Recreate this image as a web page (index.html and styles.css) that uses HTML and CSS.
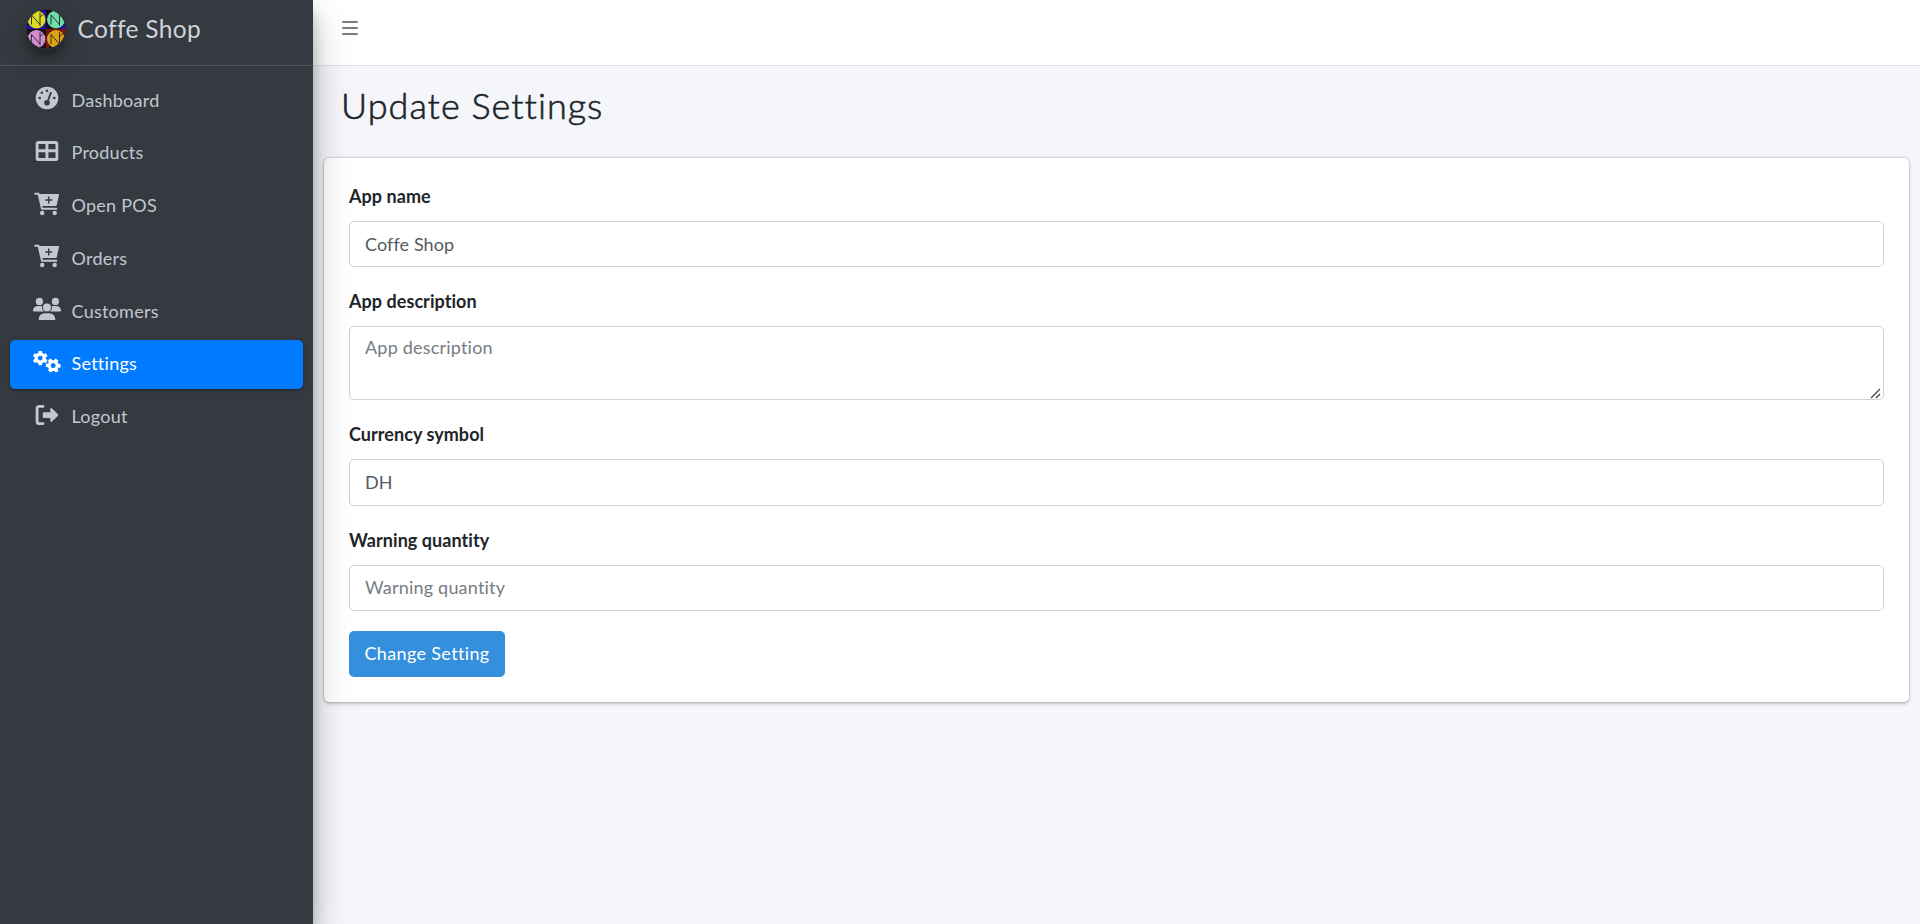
FILE: index.html
```html
<!DOCTYPE html>
<html lang="en">
<head>
<meta charset="utf-8">
<title>Update Settings</title>
<link rel="stylesheet" href="styles.css">
</head>
<body>
<svg width="0" height="0" class="defs" aria-hidden="true">
  <symbol id="cart" viewBox="0 0 26 24">
    <path fill="none" stroke="currentColor" stroke-width="2" stroke-linecap="round" stroke-linejoin="round" d="M1.200 1.800H4.500L8 16.700H22.300"/>
    <path fill="currentColor" fill-rule="evenodd" d="M5 2H24.500Q25.300 2 25 3L22.800 13Q22.500 14 21.500 14H7.800ZM14 4.500V7.300H11.200V8.700H14V11.500H15.400V8.700H18.200V7.300H15.400V4.500Z"/>
    <circle cx="8.200" cy="21" r="2.200" fill="currentColor"/><circle cx="20.700" cy="21" r="2.200" fill="currentColor"/>
  </symbol>
  <symbol id="gear" viewBox="-8 -8 16 16">
    <path fill="currentColor" fill-rule="evenodd" d="M-1.700-7.400H1.700L2.200-5.100Q3-4.800 3.700-4.200L5.900-5L7.500-2.100L5.700-.6V.8L7.500 2.300L5.900 5L3.700 4.300Q3 4.900 2.200 5.200L1.700 7.400H-1.700L-2.200 5.200Q-3 4.900-3.700 4.300L-5.900 5L-7.500 2.300L-5.700.8V-.6L-7.500-2.100L-5.900-5L-3.700-4.200Q-3-4.800-2.200-5.100ZM0-2.500A2.500 2.500 0 1 0 0 2.500A2.500 2.500 0 1 0 0-2.500Z"/>
  </symbol>
</svg>
<div class="app">
  <aside class="sidebar">
    <a class="brand">
      <svg class="brand-logo" viewBox="0 0 40 40">
        <defs><clipPath id="round"><circle cx="20" cy="20" r="19.500"/></clipPath></defs>
        <g clip-path="url(#round)">
          <path fill="#14101c" d="M0 0H40V40H0Z"/>
          <path fill="#2410a0" d="M15 0H20V20H0V16H17ZM35 16H40V20H34Z"/>
          <path fill="#7c1608" d="M20 20H40V25H35L23 22V40H20Z"/>
          <circle cx="10.500" cy="10.500" r="9" fill="#d9dc22"/><circle cx="30" cy="10.500" r="9" fill="#6fdda9"/>
          <circle cx="10.500" cy="30" r="9" fill="#d48bd2"/><circle cx="30" cy="30" r="9" fill="#dda116"/>
          <g fill="none" stroke="#20231f" stroke-width=".9">
            <path id="rune" d="M5.500 15.500V6L14 15.500M14 17V3.500M14 8L17.500 5"/>
            <use href="#rune" x="19.500"/><use href="#rune" y="19.500"/><use href="#rune" x="19.500" y="19.500"/>
          </g>
        </g>
      </svg>
      <span class="brand-text">Coffe Shop</span>
    </a>
    <nav class="menu">
      <a class="item"><svg class="icon" viewBox="0 0 28 24"><circle cx="14" cy="12" r="11.300" fill="currentColor"/><g class="cut"><circle cx="14" cy="4.700" r="1.300"/><circle cx="8.800" cy="6.800" r="1.300"/><circle cx="6.700" cy="12" r="1.300"/><circle cx="21.300" cy="12" r="1.300"/><circle cx="14" cy="16.700" r="2.800"/><path d="M17.300 5.800L18.900 6.500L15.500 16L13.700 15.400Z"/></g></svg><span>Dashboard</span></a>
      <a class="item"><svg class="icon" viewBox="0 0 28 24"><path fill="currentColor" fill-rule="evenodd" d="M5.500 2H22.500A2.800 2.800 0 0 1 25.300 4.800V19.200A2.800 2.800 0 0 1 22.500 22H5.500A2.800 2.800 0 0 1 2.700 19.200V4.800A2.800 2.800 0 0 1 5.500 2ZM5.500 5V10.300H12.500V5ZM15.400 5V10.300H22.500V5ZM5.500 13.300V19H12.500V13.300ZM15.400 13.300V19H22.500V13.300Z"/></svg><span>Products</span></a>
      <a class="item"><svg class="icon" viewBox="0 0 28 24"><use href="#cart" x="1" width="26" height="24"/></svg><span>Open POS</span></a>
      <a class="item"><svg class="icon" viewBox="0 0 28 24"><use href="#cart" x="1" width="26" height="24"/></svg><span>Orders</span></a>
      <a class="item"><svg class="icon" viewBox="0 0 28 24"><g fill="currentColor"><circle cx="6.400" cy="4.400" r="3.600"/><circle cx="22.400" cy="4.400" r="3.600"/><path d="M4.600 9H8Q9 9 9.600 9.400Q9.400 12.500 11.300 14.500H.9Q0 14.500 0 13.600Q.3 9.400 4.600 9ZM20 9H23.400Q27.700 9.400 28 13.600Q28 14.500 27.100 14.500H16.700Q18.700 12.500 18.400 9.400Q19 9 20 9Z"/><path d="M11.600 16.200H16.400Q21.800 16.700 22.400 22Q22.400 23 21.400 23H6.600Q5.600 23 5.600 22Q6.200 16.700 11.600 16.200Z"/><circle class="front-head" cx="14" cy="10.500" r="4.600"/></g></svg><span>Customers</span></a>
      <a class="item active"><svg class="icon" viewBox="0 0 28 24"><use href="#gear" x="-.5" y=".3" width="15.500" height="15.500"/><use href="#gear" x="12.500" y="7.800" width="15.500" height="15.500" transform="rotate(30 20.250 15.550)"/></svg><span>Settings</span></a>
      <a class="item"><svg class="icon" viewBox="0 0 28 24"><path fill="none" stroke="currentColor" stroke-width="2.900" stroke-linecap="round" d="M10 3.400H6.300Q4.100 3.400 4.100 5.600V18.400Q4.100 20.600 6.300 20.600H10"/><path fill="currentColor" d="M10.800 9.200H17.300V6.100Q17.500 4.500 19 5.500L24.800 11Q25.600 12 24.800 13L19 18.600Q17.500 19.500 17.300 17.900V14.900H10.800Q9.800 14.900 9.800 13.900V10.200Q9.800 9.200 10.800 9.200Z"/></svg><span>Logout</span></a>
    </nav>
  </aside>
  <div class="main">
    <header class="topbar"><svg class="burger" viewBox="0 0 16 14"><path stroke="currentColor" stroke-width="1.800" stroke-linecap="round" d="M1 1H15M1 7H15M1 13H15"/></svg></header>
    <h1 class="title">Update Settings</h1>
    <form class="card">
      <label class="label">App name</label>
      <input class="field" value="Coffe Shop">
      <label class="label">App description</label>
      <div class="area-wrap">
        <textarea class="field area" placeholder="App description"></textarea>
        <svg class="grip" viewBox="0 0 11 11"><path stroke="#444" stroke-width="1.300" d="M1 10L10 1M6 10L10 6"/></svg>
      </div>
      <label class="label">Currency symbol</label>
      <input class="field" value="DH">
      <label class="label">Warning quantity</label>
      <input class="field" placeholder="Warning quantity">
      <button class="submit" type="button">Change Setting</button>
    </form>
  </div>
</div>
</body>
</html>
```
FILE: styles.css
```css
* { box-sizing: border-box; }
body { margin: 0; font: 18px/27px Lato, "Noto Sans", sans-serif; font-variant-ligatures: none; color: #212529; background: #f4f6f9; overflow: hidden; }
.defs { position: absolute; }
.app { display: flex; height: 924px; }
.sidebar { width: 313px; flex: none; background: #343a40; color: #c2c7d0; z-index: 2; box-shadow: 0 17.5px 35px rgba(0,0,0,.25), 0 12.5px 12.5px rgba(0,0,0,.22); }
.brand { display: flex; align-items: center; height: 66px; padding: 0 0 7px 26px; border-bottom: 1px solid #4b545c; gap: 11.5px; }
.brand-logo { width: 40px; height: 40px; border-radius: 50%; box-shadow: 0 12.5px 25px rgba(0,0,0,.19), 0 7.5px 7.5px rgba(0,0,0,.23); }
.brand-text { font-size: 24.5px; color: #d0d3d8; letter-spacing: .35px; padding-bottom: 2px; }
.menu { display: flex; flex-direction: column; gap: 3.8px; padding: 10px; }
.item { display: flex; align-items: center; height: 49px; padding: 0 0 1px 23px; border-radius: 5px; gap: 10.5px; letter-spacing: .25px; }
.item.active { background: #007bff; color: #fff; box-shadow: 0 1px 4px rgba(0,0,0,.12), 0 1px 3px rgba(0,0,0,.24); }
.icon { width: 28px; height: 24px; margin-bottom: 4px; }
.cut { fill: #343a40; }
.front-head { stroke: #343a40; stroke-width: 1; }
.main { flex: 1; min-width: 0; }
.topbar { height: 66px; background: #fff; border-bottom: 1px solid #dee2e6; padding: 21px 0 0 29px; color: #7b7b7b; }
.burger { display: block; width: 16px; height: 14px; }
.title { margin: 0; padding: 18px 0 0 28px; height: 92px; font-size: 36px; line-height: 43px; font-weight: 300; letter-spacing: 1px; -webkit-text-stroke: .6px #212529; }
.card { margin: 0 11px; padding: 24px 25px 25px; height: 544px; background: #fff; border-radius: 5px; box-shadow: 0 0 1.5px 1px rgba(0,0,0,.1), 0 1.25px 3.75px rgba(0,0,0,.2); }
.label { display: block; height: 39px; padding-top: 1px; font-weight: 700; letter-spacing: .05px; }
.field { display: block; width: 100%; height: 46.400px; margin: 0 0 20px; padding: 7px 15px 8px; border: 1px solid #ced1d5; border-radius: 5px; background: #fff; color: #555b61; font: inherit; letter-spacing: .1px; outline: none; }
.field::placeholder { color: #757c83; opacity: 1; letter-spacing: .2px; }
.area-wrap { position: relative; margin-bottom: 20px; }
.area { height: 74px; margin: 0; resize: none; }
.grip { position: absolute; right: 3px; bottom: 1px; width: 11px; height: 11px; }
.submit { display: block; width: 156px; height: 46px; padding: 0 0 1px; border: 0; border-radius: 5px; background: #3490dc; color: #fff; font: inherit; letter-spacing: .35px; }
```
